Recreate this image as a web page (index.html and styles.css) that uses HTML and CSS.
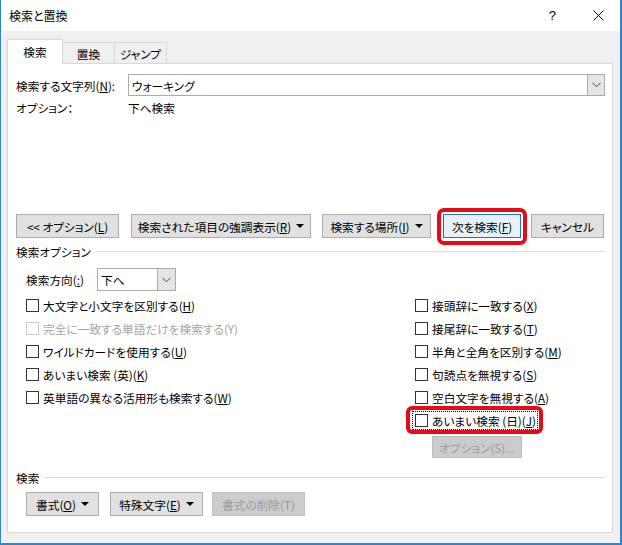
FILE: index.html
```html
<!DOCTYPE html>
<html lang="ja">
<head>
<meta charset="utf-8">
<title>検索と置換</title>
<link rel="stylesheet" href="styles.css">
</head>
<body>
<div class="window">
  <div class="titlebar">
    <span class="title">検索と置換</span>
    <span class="tb-help">?</span>
    <span class="tb-close"><svg width="11" height="11" viewBox="0 0 11 11"><path d="M0.5 0.5 L10.5 10.5 M10.5 0.5 L0.5 10.5" stroke="#000" stroke-width="1" fill="none"/></svg></span>
  </div>
  <div class="client">
    <div class="tabs">
      <div class="tab active">検索</div>
      <div class="tab t2">置換</div>
      <div class="tab t3">ジャンプ</div>
    </div>
    <div class="panel">
      <div class="find-row">
        <span class="find-label">検索する文字列(<u>N</u>):</span>
        <div class="combo find-combo">
          <span class="combo-text">ウォーキング</span>
          <span class="combo-btn"><svg width="9" height="6" viewBox="0 0 9 6"><path d="M0.5 0.8 L4.5 4.8 L8.5 0.8" stroke="#444" stroke-width="1" fill="none"/></svg></span>
        </div>
      </div>
      <div class="opt-row"><span class="opt-label">オプション：</span><span>下へ検索</span></div>

      <div class="btn-row">
        <button class="btn w-less">&lt;&lt; オプション(<u>L</u>)</button>
        <button class="btn w-hl">検索された項目の強調表示(<u>R</u>)<span class="tri"></span></button>
        <button class="btn w-place">検索する場所(<u>I</u>)<span class="tri"></span></button>
        <button class="btn btn-default w-next">次を検索(<u>F</u>)</button>
        <button class="btn w-cancel">キャンセル</button>
      </div>

      <div class="section s-opt"><span>検索オプション</span><span class="rule"></span></div>

      <div class="dir-row">
        <span class="dir-label">検索方向(<u>:</u>)</span>
        <div class="combo dir-combo">
          <span class="combo-text">下へ</span>
          <span class="combo-btn"><svg width="9" height="6" viewBox="0 0 9 6"><path d="M0.5 0.8 L4.5 4.8 L8.5 0.8" stroke="#444" stroke-width="1" fill="none"/></svg></span>
        </div>
      </div>

      <div class="checks">
        <div class="col">
          <div class="cb"><span class="box"></span><span>大文字と小文字を区別する(<u>H</u>)</span></div>
          <div class="cb disabled"><span class="box"></span><span>完全に一致する単語だけを検索する(Y)</span></div>
          <div class="cb"><span class="box"></span><span>ワイルドカードを使用する(<u>U</u>)</span></div>
          <div class="cb"><span class="box"></span><span>あいまい検索 (英)(<u>K</u>)</span></div>
          <div class="cb"><span class="box"></span><span>英単語の異なる活用形も検索する(<u>W</u>)</span></div>
        </div>
        <div class="col">
          <div class="cb"><span class="box"></span><span>接頭辞に一致する(<u>X</u>)</span></div>
          <div class="cb"><span class="box"></span><span>接尾辞に一致する(<u>T</u>)</span></div>
          <div class="cb"><span class="box"></span><span>半角と全角を区別する(<u>M</u>)</span></div>
          <div class="cb"><span class="box"></span><span>句読点を無視する(<u>S</u>)</span></div>
          <div class="cb"><span class="box"></span><span>空白文字を無視する(<u>A</u>)</span></div>
          <div class="cb"><span class="focus"><span class="box"></span><span>あいまい検索 (日)(<u>J</u>)</span></span></div>
        </div>
      </div>

      <button class="btn btn-disabled w-optS">オプション(S)...</button>

      <div class="section s-find"><span>検索</span><span class="rule"></span></div>

      <div class="bottom-row">
        <button class="btn w-fmt">書式(<u>O</u>)<span class="tri"></span></button>
        <button class="btn w-spec">特殊文字(<u>E</u>)<span class="tri"></span></button>
        <button class="btn btn-disabled w-clr">書式の削除(T)</button>
      </div>
    </div>
  </div>
</div>
</body>
</html>
```

FILE: styles.css
```css
* { box-sizing: border-box; }
html, body { margin: 0; padding: 0; }
body {
  width: 622px;
  height: 545px;
  overflow: hidden;
  background: #ffffff;
  font-family: "Noto Sans CJK JP", "Noto Sans", sans-serif;
  font-size: 11.7px;
  color: #000;
  font-feature-settings: "palt" 1;
}
u { text-decoration: underline; text-underline-offset: 1px; }

.window {
  width: 622px;
  height: 545px;
  display: flex;
  flex-direction: column;
  border-left: 1px solid #2b86d4;
  border-right: 2px solid #2b86d4;
  border-bottom: 2px solid #2b86d4;
}

.titlebar {
  height: 31px;
  background: #ffffff;
  display: flex;
  align-items: center;
  padding-left: 8px;
  flex-shrink: 0;
}
.title { flex: 1; font-size: 12px; }
.tb-help { font-family: "Liberation Sans", sans-serif; font-size: 13px; margin-right: 37px; }
.tb-close { display: flex; margin-right: 16px; }

.client {
  flex: 1;
  background: #f0f0f0;
  padding: 8px 7px 0 6px;
}

.tabs {
  display: flex;
  align-items: flex-end;
  height: 24px;
}
.tab {
  height: 21px;
  width: 53px;
  border: 1px solid #d9d9d9;
  border-bottom: none;
  background: #f0f0f0;
  display: flex;
  align-items: center;
  justify-content: center;
  margin-left: -1px;
}
.tab.active {
  width: 56px;
  height: 25px;
  margin-left: 0;
  margin-bottom: -1px;
  background: #ffffff;
  position: relative;
  z-index: 1;
  padding-bottom: 2px;
}

.panel {
  height: 470px;
  border: 1px solid #d9d9d9;
  background: #ffffff;
  padding: 10px 7px 0 8px;
  display: flex;
  flex-direction: column;
  align-items: flex-start;
}

.find-row { display: flex; height: 22px; align-items: center; width: 100%; }
.find-label { width: 112px; flex-shrink: 0; }

.combo {
  display: flex;
  height: 100%;
  border: 1px solid #ababab;
  background: #fff;
  align-items: stretch;
}
.find-combo { flex: 1; }
.combo-text { flex: 1; display: flex; align-items: center; padding-left: 3px; }
.combo-btn {
  width: 17px;
  background: #e5e5e5;
  border-left: 1px solid #ababab;
  display: flex;
  align-items: center;
  justify-content: center;
}

.opt-row { display: flex; align-items: center; height: 20px; margin-top: 1px; }
.opt-label { width: 112px; }

.btn {
  height: 24px;
  padding: 0;
  border: 1px solid #adadad;
  background: #e1e1e1;
  font-family: inherit;
  font-size: 11.7px;
  font-feature-settings: "palt" 1;
  color: #000;
  display: flex;
  align-items: center;
  justify-content: center;
  flex-shrink: 0;
}
.tri {
  display: inline-block;
  width: 0;
  height: 0;
  border-left: 4px solid transparent;
  border-right: 4px solid transparent;
  border-top: 4px solid #000;
  margin-left: 5px;
}

.btn-row { display: flex; margin-top: 97px; height: 24px; width: 100%; }
.w-less { width: 103px; }
.w-hl { width: 180px; margin-left: 12px; }
.w-place { width: 109px; margin-left: 11px; }
.w-next { width: 78px; margin-left: 12px; }
.w-cancel { width: 73px; margin-left: 10px; }

.btn-default {
  background: #e5f1fb;
  border: 1px solid #2a6fb5;
  position: relative;
}
.btn-default::after {
  content: "";
  position: absolute;
  top: -7px;
  left: -7px;
  right: -7px;
  bottom: -8px;
  border: 4px solid #e50b18;
  border-radius: 7px;
}

.btn-disabled {
  background: #cccccc;
  border: 1px solid #bfbfbf;
  color: #9b9b9b;
}

.section {
  display: flex;
  align-items: center;
  height: 14px;
  width: 100%;
}
.section .rule { flex: 1; height: 1px; background: #dcdcdc; margin-left: 5px; }
.s-opt { margin-top: 6px; }
.s-find { margin-top: 12px; }

.dir-row { display: flex; align-items: center; height: 23px; margin-top: 10px; padding-left: 10px; }
.dir-label { width: 71px; }
.dir-combo { width: 79px; }
.dir-combo .combo-btn { width: 18px; }

.checks {
  display: grid;
  grid-template-columns: 389px 1fr;
  margin-top: 3px;
  padding-left: 10px;
  width: 100%;
}
.col { display: flex; flex-direction: column; align-items: flex-start; }
.cb { display: flex; align-items: center; height: 23px; }
.box {
  width: 13px;
  height: 13px;
  border: 1px solid #333333;
  background: #fff;
  margin-right: 4px;
  flex-shrink: 0;
}
.cb.disabled { color: #a3a3a3; }
.cb.disabled .box { border-color: #cccccc; }

.focus {
  display: flex;
  align-items: center;
  height: 19px;
  margin-left: -3px;
  padding-left: 2px;
  padding-right: 1px;
  border: 1px dotted #000;
  position: relative;
}
.focus::after {
  content: "";
  position: absolute;
  top: -6px;
  left: -7px;
  right: -6px;
  bottom: -5px;
  border: 4px solid #e50b18;
  border-radius: 6px;
}

.w-optS { width: 90px; height: 22px; margin-top: 4px; margin-left: 416px; }

.bottom-row { display: flex; margin-top: 8px; padding-left: 10px; height: 24px; }
.w-fmt { width: 73px; }
.w-spec { width: 93px; margin-left: 11px; }
.w-clr { width: 93px; margin-left: 9px; }
```
